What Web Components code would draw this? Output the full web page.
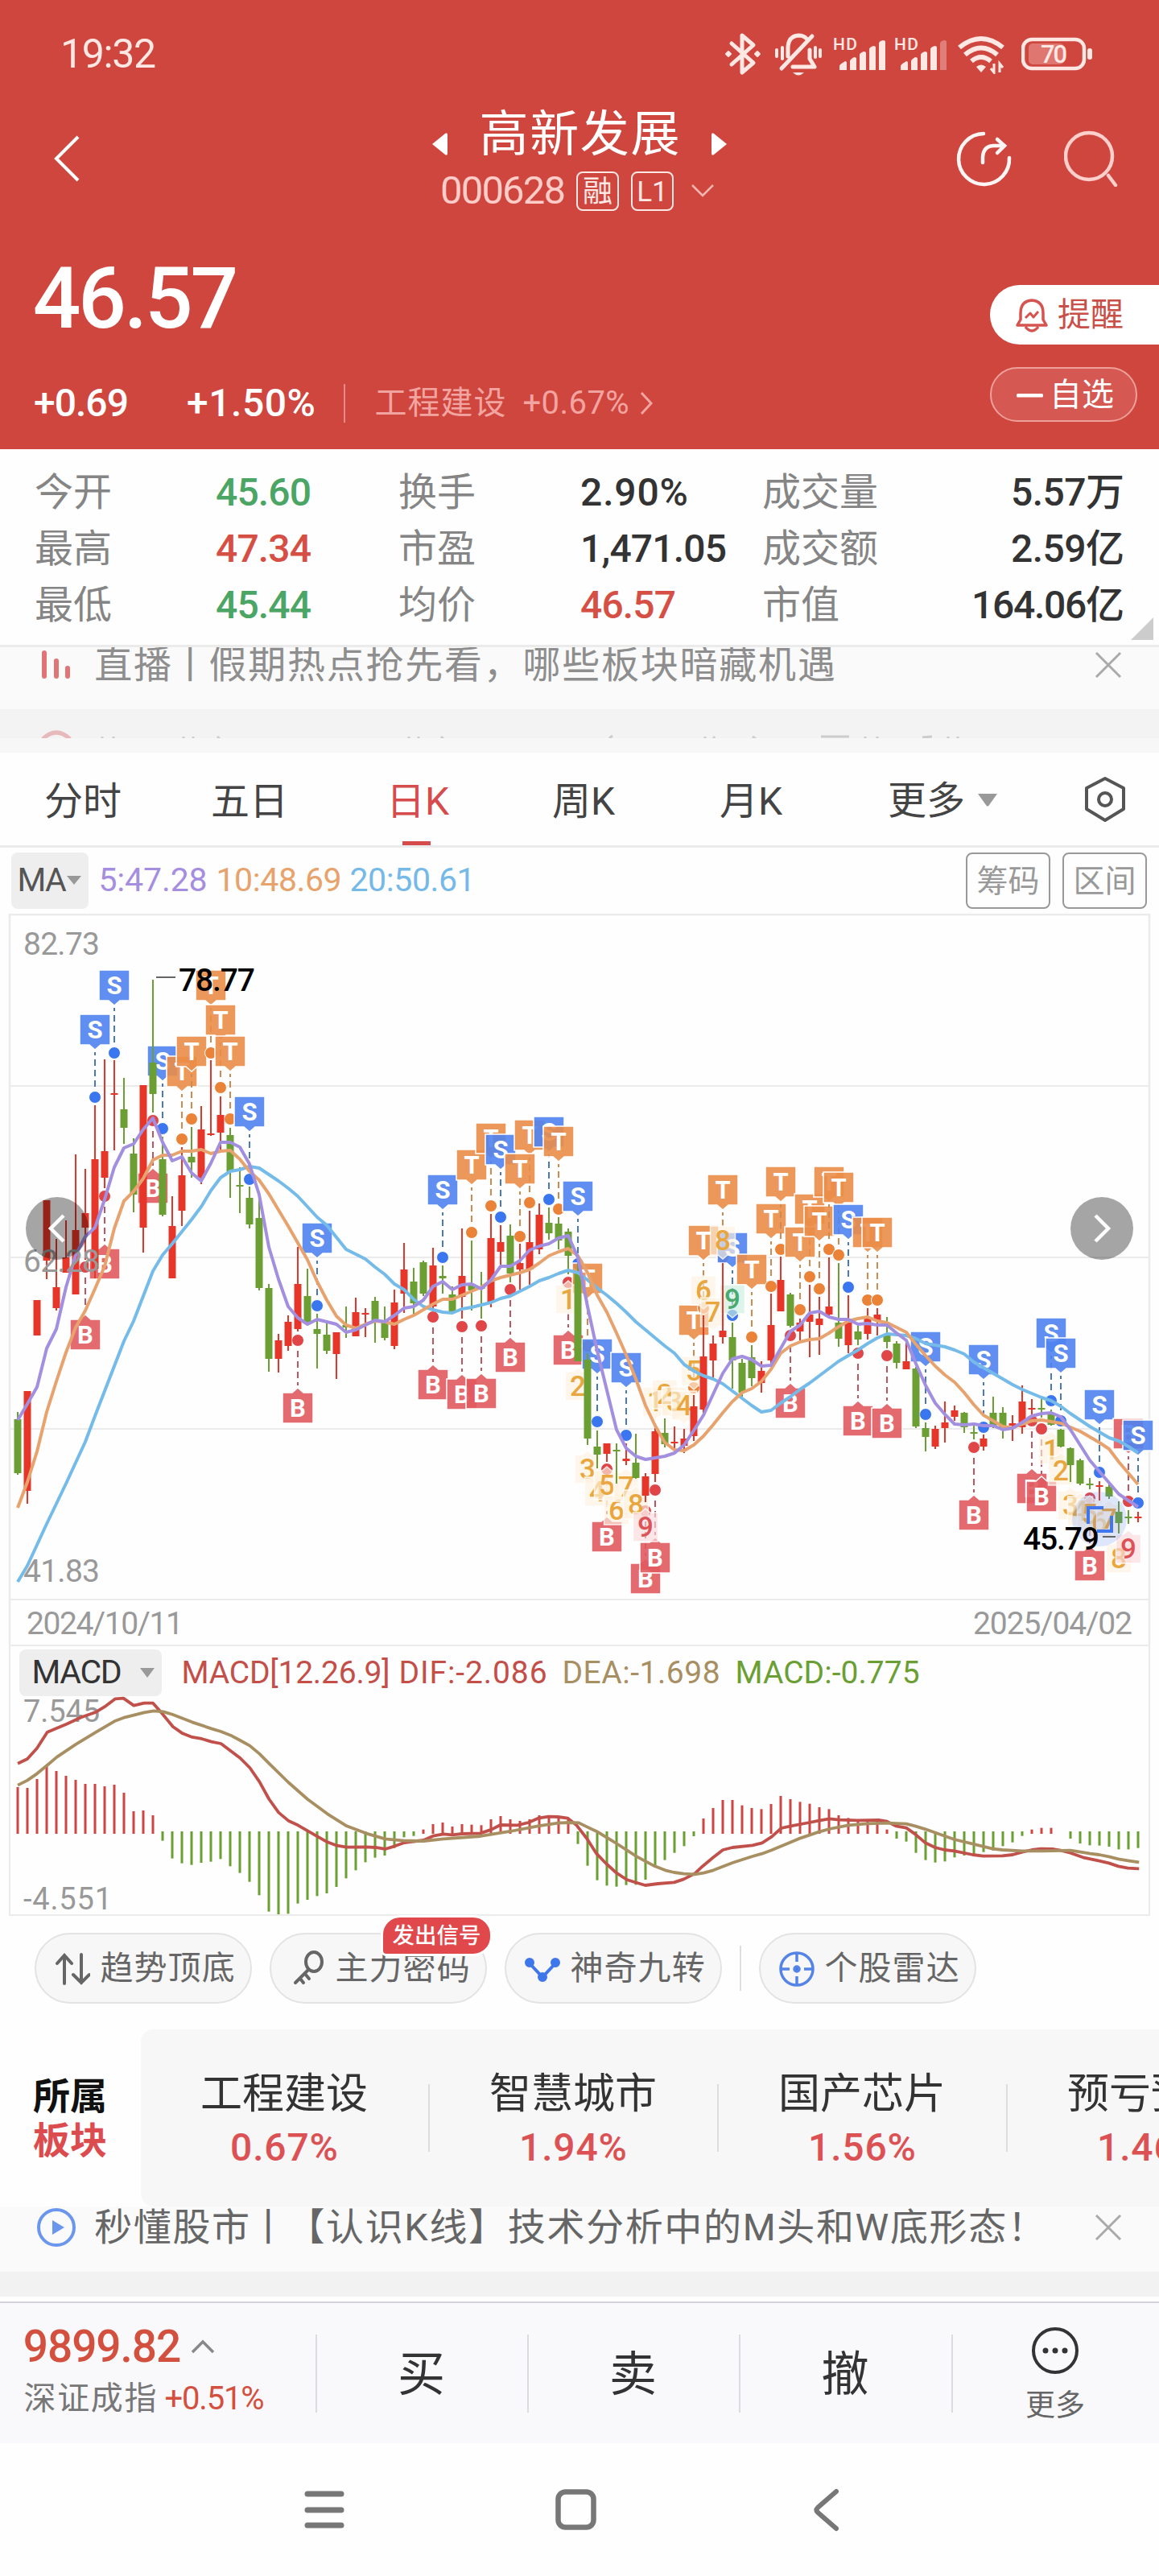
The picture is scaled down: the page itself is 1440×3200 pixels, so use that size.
<!DOCTYPE html>
<html lang="zh-CN">
<head>
<meta charset="utf-8">
<title>高新发展 000628</title>
<style>
  body {
    margin: 0;
    width: 1440px;
    height: 3200px;
    overflow: hidden;
    background: #fefefe;
    font-family: Roboto, "Noto Sans CJK SC", sans-serif;
    line-height: 1.2;
    color: #333;
  }
  .bar { margin: 0 -2px; }
</style>
</head>
<body>
<status-bar></status-bar>
<quote-header></quote-header>
<stat-grid></stat-grid>
<ticker-strip kind="live">
  <fit-text w="917">直播<span class="bar">丨</span>假期热点抢先看，哪些板块暗藏机遇</fit-text>
</ticker-strip>
<next-ticker></next-ticker>
<chart-tabs></chart-tabs>
<ma-row></ma-row>
<k-chart></k-chart>
<macd-chart></macd-chart>
<tool-row></tool-row>
<sector-row></sector-row>
<ticker-strip kind="video">
  <fit-text w="1178">秒懂股市<span class="bar">丨</span>【认识K线】技术分析中的M头和W底形态！</fit-text>
</ticker-strip>
<trade-bar></trade-bar>
<nav-bar></nav-bar>

<script>
  // Small base: every component sets its html once in an open shadow root.
  class Base extends HTMLElement {
    constructor() {
      super();
      this.attachShadow({ mode: "open" }).innerHTML = `
        <style>:host { display: block; box-sizing: border-box; } * { box-sizing: border-box; } svg { display: block; flex: none; }</style>
        ${this.render()}`;
    }
    render() { return ""; }
  }

  class StatusBar extends Base {
    render() {
      const bars = last => `
        <svg width="66" height="46" viewBox="0 0 66 46" overflow="visible">
          <text x="0" y="18" font-family="Roboto" font-size="21" font-weight="500" textLength="30" fill="#ffe7e4">HD</text>
          <g fill="#ffe7e4">
            <path d="M8 43v-5q0-2 7-6q2 0 2 2v9zM21 43V32q0-2 5-5q3 0 3 2v14zM33 43V24q0-2 5-4q3 0 3 2v21zM45 43V17q0-2 5-4q3 0 3 2v28z"/>
            <path opacity="${last}" d="M57 43V10q0-3 5-4q3 0 3 2v35z"/>
          </g>
        </svg>`;
      return `
      <style>
        :host { display: flex; align-items: center; height: 134px; padding: 0 81px 0 77px; background: #cf463f; color: #ffe7e4; }
        .time { font-size: 50px; margin-right: auto; }
        .icons { display: flex; align-items: center; gap: 10px; }
      </style>
      <fit-text class="time" w="115">19:32</fit-text>
      <div class="icons">
        <svg width="46" height="54" viewBox="0 0 46 54" fill="none" stroke="#ffe7e4" stroke-width="5" stroke-linejoin="round" stroke-linecap="round">
          <path d="M9 14L36 38L22 50V4L36 16L9 40"/>
          <path d="M5 24l3 3l-3 3l-3-3zM41 24l3 3l-3 3l-3-3z" fill="#ffe7e4" stroke-width="2"/>
        </svg>
        <svg style="margin:0 4px 0 7px" width="58" height="54" viewBox="0 0 58 54" fill="none" stroke="#ffe7e4" stroke-width="5" stroke-linecap="round">
          <path d="M16 30V20q0-15 13-16q7 0 11 5M43 22v11l6 10H22M46 5L8 45" stroke-linejoin="round"/>
          <path d="M22 50h14q-7 7-14 0z" fill="#ffe7e4" stroke="none"/>
          <path d="M2 22v8M9 19v14M50 19v12M56 22v8" stroke-width="4"/>
        </svg>
        <span style="display:flex;gap:10px">${bars(1)}${bars(.35)}</span>
        <svg style="margin-left:2px" width="60" height="50" viewBox="0 0 60 50" fill="none" stroke="#ffe7e4" stroke-width="6">
          <path d="M3 17Q30-5 57 17M10 26Q30 9 50 26M18 34Q30 24 42 34"/>
          <path d="M24 41q6-5 12 0l-6 7z" fill="#ffe7e4" stroke="none"/>
          <path d="M46 37v11l-4-5M53 48V37l4 5" stroke-width="3"/>
        </svg>
        <svg style="margin-left:10px" width="90" height="44" viewBox="0 0 90 44">
          <rect x="2" y="4" width="76" height="36" rx="11" fill="none" stroke="#ffe7e4" stroke-width="4.5"/>
          <rect x="9" y="9" width="44" height="26" rx="5" fill="#e07670"/>
          <rect x="82" y="15" width="6" height="14" rx="3" fill="#ffe7e4"/>
          <text x="24" y="33" font-family="Roboto" font-size="31" font-weight="500" textLength="33" fill="#ffe7e4">70</text>
        </svg>
      </div>`;
    }
  }

  class QuoteHeader extends Base {
    render() {
      return `
      <style>
        :host { height: 424px; background: #cf463f; color: #fff; }
        .title { display: grid; grid-template: 125px / 1fr 400px 1fr; align-items: center; height: 128px; padding: 0 50px 0 66px; }
        .mid { display: flex; flex-direction: column; align-items: center; align-self: start; margin: 1px 0 0 -16px; }
        .name { display: flex; align-items: center; gap: 40px; height: 66px; font-size: 61px; }
        .name svg { margin-top: 21px; }
        .code { display: flex; align-items: center; gap: 15px; height: 52px; margin: 10px 3px 0 0; font-size: 49px; color: #ffccc8; }
        .tag { width: 53px; height: 49px; border: 2px solid #ffe7e4; border-radius: 8px; font-size: 37px; line-height: 47px; text-align: center; color: #ffe7e4; }
        .acts { display: flex; justify-content: flex-end; gap: 64px; }
        .body { display: grid; grid-template-columns: 1fr 210px; margin-top: 92px; }
        .price { display: block; font-size: 105px; font-weight: 500; line-height: 70px; height: 70px; margin: -17px 0 0 45px; }
        .chg { display: flex; align-items: center; height: 50px; margin: 69px 0 0 44px; font-size: 48px; font-weight: 500; }
        .chg i { width: 2px; height: 48px; background: #e38c87; margin: 0 38px 0 37px; }
        .sec { display: flex; align-items: center; font-size: 40px; font-weight: 400; color: #f2a5a0; }
        .remind { display: flex; align-items: center; gap: 12px; height: 74px; padding: 2px 0 0 32px; background: #fff; border-radius: 37px 0 0 37px; color: #c94f49; font-size: 41px; }
        .opt { display: flex; align-items: center; gap: 8px; width: 183px; height: 68px; margin-top: 28px; padding: 2px 0 0 31px; border: 2px solid #eea09b; border-radius: 34px; background: #d55852; font-size: 40px; }
      </style>
      <div class="title">
        <svg width="34" height="58" viewBox="0 0 34 58" fill="none" stroke="#fff" stroke-width="4"><path d="M31 2L4 29L31 56"/></svg>
        <div class="mid">
          <div class="name">
            <svg width="22" height="30" viewBox="0 0 22 30"><path d="M1 15L17 2Q20 0 20 4V26Q20 30 17 28z" fill="#fff"/></svg>
            <fit-text w="244">高新发展</fit-text>
            <svg width="22" height="30" viewBox="0 0 22 30"><path d="M21 15L5 2Q2 0 2 4V26Q2 30 5 28z" fill="#fff"/></svg>
          </div>
          <div class="code">
            <fit-text w="152">000628</fit-text><span class="tag">融</span><span class="tag" style="font-size:35px">L1</span>
            <svg style="margin-left:6px" width="30" height="18" viewBox="0 0 30 18" fill="none" stroke="#f6b6b2" stroke-width="2.5"><path d="M2 2l13 13L28 2"/></svg>
          </div>
        </div>
        <div class="acts">
          <svg width="70" height="70" viewBox="0 0 70 70" fill="none" stroke="#fff5f4" stroke-width="4.5" stroke-linecap="round">
            <path d="M34 4A31.5 31.5 0 1 0 66 34M33 40V33Q34 19 47 19H60M51 11l9 8l-9 9"/>
          </svg>
          <svg width="68" height="70" viewBox="0 0 68 70" fill="none" stroke="#ffcfcc" stroke-width="4.5" stroke-linecap="round">
            <circle cx="31" cy="32" r="29"/><path d="M55 56l9 12"/>
          </svg>
        </div>
      </div>
      <div class="body">
        <div>
          <fit-text class="price" w="247">46.57</fit-text>
          <div class="chg">
            <fit-text w="114">+0.69</fit-text>
            <fit-text w="156" style="margin-left:76px">+1.50%</fit-text><i></i>
            <span class="sec"><fit-text w="160">工程建设</fit-text>
              <fit-text w="129" style="margin-left:24px">+0.67%</fit-text>
              <svg style="margin-left:15px" width="18" height="30" viewBox="0 0 18 30" fill="none" stroke="#f2a5a0" stroke-width="3"><path d="M2 2l12 13L2 28"/></svg>
            </span>
          </div>
        </div>
        <div>
          <div class="remind">
            <svg width="40" height="42" viewBox="0 0 40 42" fill="none" stroke="#d65450" stroke-width="3.5" stroke-linejoin="round">
              <path d="M6 26V18Q6 3 20 2Q34 3 34 18V26L38 33H2zM12 35Q20 45 28 35"/><path d="M12 24l6-6l4 5l6-7" stroke-width="3"/>
            </svg>提醒
          </div>
          <div class="opt"><svg width="33" height="5"><rect width="33" height="4.5" rx="1.5" fill="#fff"/></svg>自选</div>
        </div>
      </div>`;
    }
  }

  class StatGrid extends Base {
    render() {
      const rows = [
        ["今开", "45.60", "g", 115, "换手", "2.90%", "", 130, "成交量", "5.57万", 137],
        ["最高", "47.34", "r", 115, "市盈", "1,471.05", "", 178, "成交额", "2.59亿", 137],
        ["最低", "45.44", "g", 115, "均价", "46.57", "r", 115, "市值", "164.06亿", 186]
      ];
      return `
      <style>
        :host { position: relative; height: 246px; padding-top: 19px; border-bottom: 3px solid #ebebeb; background: #fefefe; }
        .grid { display: grid; grid-template: repeat(3, 70px) / 227px 225px 228px 224px 1fr auto; align-items: center; margin: 0 45px 0 43px; font-size: 48px; color: #858585; }
        .v { font-weight: 500; font-size: 48px; color: #333; }
        .g { color: #4ba564; } .r { color: #d64f45; }
        .fold { position: absolute; right: 7px; bottom: 6px; }
      </style>
      <div class="grid">${rows.map(r => `
        <span>${r[0]}</span><fit-text class="v ${r[2]}" w="${r[3]}">${r[1]}</fit-text>
        <span>${r[4]}</span><fit-text class="v ${r[6]}" w="${r[7]}">${r[5]}</fit-text>
        <span>${r[8]}</span><fit-text class="v" w="${r[10]}" style="justify-self:end">${r[9]}</fit-text>`).join("")}
      </div>
      <svg class="fold" width="28" height="28"><path d="M28 0V28H0z" fill="#ccc"/></svg>`;
    }
  }

  class TickerStrip extends Base {
    render() {
      const live = this.getAttribute("kind") === "live";
      const icon = live
        ? `<svg width="50" height="50" viewBox="0 0 50 50" stroke="#e07578" stroke-width="6" stroke-linecap="round"><path d="M10 10V39M25 20V39M39 29V39"/></svg>`
        : `<svg width="50" height="50" viewBox="0 0 50 50"><circle cx="25" cy="25" r="22" fill="none" stroke="#6b96ee" stroke-width="4"/><path d="M20 16v18l15-9z" fill="#6b96ee"/></svg>`;
      return `
      <style>
        :host { height: ${live ? 77 : 81}px; overflow: hidden; background: #fafafa; font-size: 47px; color: ${live ? "#8e8e8e" : "#666"}; }
        .row { display: flex; align-items: center; height: 50px; margin: ${live ? -3 : 1}px 45px 0 45px; }
        .x { margin-left: auto; }
        ::slotted(*) { margin-left: 24px; }
      </style>
      <div class="row">${icon}<slot></slot>
        <svg class="x" width="36" height="36" viewBox="0 0 36 36" stroke="#aaa" stroke-width="3"><path d="M3 3L33 33M33 3L3 33"/></svg>
      </div>`;
    }
  }

  // Top edge of the ticker line that is scrolling in.
  class NextTicker extends Base {
    render() {
      return `
      <style>:host { height: 54px; background: linear-gradient(#f3f3f3 0 36px, #f7f7f7 36px); }</style>
      <svg width="1440" height="36" fill="none" stroke="#ccc" stroke-width="3">
        <path d="M53 37Q70 21 87 37" stroke="#e8b9ba" stroke-width="5"/>
        <path d="M127 34v3M141 34v3M228 34v3M240 34v3M270 34l3 3M508 34v3M520 34v3M548 34l3 3M757 36l4-3M876 34v3M888 34l-2 3M935 34l4 3M1020 34h35M1075 34v3M1090 34v3M1146 35l12-1M1178 34v3M1190 34v3"/>
      </svg>`;
    }
  }

  class ChartTabs extends Base {
    render() {
      return `
      <style>
        :host { height: 118px; border-bottom: 3px solid #ebebeb; background: #fefefe; }
        .tabs { display: flex; height: 115px; padding: 3px 39px 0 55px; font-size: 48px; color: #444; line-height: 115px; }
        span { flex: none; width: 208px; white-space: nowrap; }
        .on { color: #d64b4b; background: linear-gradient(#d64b4b, #d64b4b) 20px 107px / 35px 7px no-repeat; }
        .more { display: flex; align-items: center; gap: 15px; width: 241px; }
      </style>
      <div class="tabs">
        <span style="width:207px">分时</span><span style="width:218px">五日</span><span class="on" style="width:206px">日K</span>
        <span>周K</span><span style="width:209px">月K</span>
        <span class="more">更多<svg width="26" height="18"><path d="M1 1H25L15 15Q13 18 11 15z" fill="#999"/></svg></span>
        <svg width="54" height="60" viewBox="0 0 54 60" style="margin:25px 0 0 2px" fill="none" stroke="#555" stroke-width="4" stroke-linejoin="round">
          <path d="M27 4L50 16V42L27 56L4 42V16z"/><circle cx="27" cy="30" r="8"/>
        </svg>
      </div>`;
    }
  }

  class MaRow extends Base {
    render() {
      return `
      <style>
        :host { display: flex; align-items: center; height: 82px; padding: 0 15px 0 14px; background: #fefefe; font-size: 41px; }
        .chip { display: flex; align-items: center; gap: 2px; width: 96px; height: 70px; padding-left: 9px; background: #eee; border-radius: 8px; color: #555; }
        .box { width: 105px; height: 70px; border: 2px solid #999; border-radius: 8px; line-height: 68px; font-size: 39px; text-align: center; color: #999; }
      </style>
      <div class="chip"><fit-text w="58">MA</fit-text><svg width="18" height="12"><path d="M0 0H18L9 11z" fill="#999"/></svg></div>
      <fit-text w="132" style="margin-left:14px;color:#a58ee0">5:47.28</fit-text>
      <fit-text w="153" style="margin-left:14px;color:#e7a36b">10:48.69</fit-text>
      <fit-text w="153" style="margin-left:13px;color:#74b9e8">20:50.61</fit-text>
      <span class="box" style="margin:0 15px 0 auto">筹码</span><span class="box">区间</span>`;
    }
  }

  const RED = "#e63529", GREEN = "#6b9f33";
  const X0 = 22, STEP = 12;
  const cx = i => X0 + STEP * i;

  // colour, high, body top, body bottom, low
  const CANDLES = `g614,623,690,692 r588,588,712,728 r475,475,519,519 r351,351,426,449 r399,459,485,488 r376,422,441,441
    r294,388,468,468 r312,367,385,425 r233,300,436,448 r176,290,323,336 r177,218,220,289 g199,238,261,281 g274,293,344,366
    r208,208,385,416 g77,180,219,242 g272,300,369,371 r346,383,448,448 r285,320,364,383 g260,297,304,323 r234,263,323,331
    r177,268,270,271 r222,245,267,289 g261,270,316,348 g310,332,334,367 g334,348,381,386 g343,373,460,463 g455,460,548,564
    r517,525,548,565 r494,502,532,538 r409,455,511,514 g436,470,502,504 g492,511,517,560 g503,518,538,542 r515,515,542,573
    g483,506,509,522 r472,490,520,520 r485,491,493,521 g471,476,502,528 g483,500,522,525 r462,478,532,536 r404,437,467,491
    g435,452,479,493 g426,428,467,470 r410,432,483,486 g432,445,448,467 g458,468,489,491 r386,445,471,498 g401,455,463,488
    g440,459,461,498 r368,398,478,484 r382,403,415,431 g381,395,442,453 r405,429,437,462 r364,403,437,456 r355,369,412,418
    g360,379,392,400 g372,380,401,412 g386,390,420,443 g424,442,551,551 g541,549,647,655 g637,657,667,684 r653,653,666,676
    g653,661,663,703 r653,672,675,680 g641,677,696,697 r690,694,718,726 r634,638,691,701 g622,640,654,658 r632,651,653,666
    r635,647,656,665 r593,607,644,650 r494,545,611,616 r519,529,550,572 r429,513,521,529 g503,521,550,585 g548,553,590,595
    g531,546,572,582 r551,563,578,590 r467,506,550,556 r421,450,489,489 g466,468,507,509 r498,503,514,525 r456,493,502,546
    r471,498,506,543 r422,483,493,498 g429,503,523,533 r469,503,531,541 g503,514,524,531 r485,497,517,524 r485,493,501,519
    g496,518,527,535 g526,529,553,560 r526,551,561,561 g558,560,632,634 g627,634,645,663 r631,635,657,660 r601,627,634,652
    r606,612,620,625 g614,615,633,640 g631,639,641,648 r642,647,657,662 g595,615,631,634 g608,615,634,647 r618,628,631,650
    r581,601,633,641 r598,609,611,619 g598,609,611,621 g611,616,630,631 g635,636,657,658 g658,659,680,701 g672,674,703,705
    g696,703,705,710 r700,705,707,724 g704,707,719,722 g725,738,752,765 g736,744,746,753 r738,744,746,751`.split(/\s+/);

  const MA5 = [624,604,583,535,511,459,419,396,385,350,310,286,281,263,249,279,302,297,317,327,305,279,279,285,306,344,409,449,
    483,497,505,499,502,505,515,512,506,500,502,494,485,483,475,458,452,462,456,455,461,450,433,433,426,413,408,405,398,395,422,
    483,538,587,636,659,669,673,671,669,665,655,637,618,592,566,548,545,549,557,556,535,514,506,491,489,496,499,499,505,504,506,
    506,516,525,554,581,603,617,629,630,629,631,631,636,634,627,619,616,615,620,636,655,674,688,702,716,724,732];
  const MA10 = [733,701,663,614,576,540,509,488,461,433,386,352,340,324,301,295,295,290,290,288,293,290,289,300,315,326,343,363,
    383,404,425,452,475,495,506,510,505,501,502,505,499,494,487,480,474,474,469,464,459,451,447,444,441,437,429,420,415,411,420,
    441,469,490,516,543,573,606,631,652,661,662,655,644,630,615,601,590,585,576,561,541,532,527,524,523,516,508,501,498,496,501,
    503,509,515,530,544,557,568,577,590,605,618,625,632,634,629,625,624,626,628,633,638,645,652,660,676,690,704];
  const MA20 = [825,805,779,753,728,703,677,651,619,588,557,526,501,470,439,419,405,390,375,359,339,323,315,313,309,311,319,327,
    336,346,359,372,382,397,412,418,424,434,443,455,462,474,483,487,490,491,486,484,481,478,473,470,464,458,451,447,442,438,441,
    450,460,469,479,490,502,512,522,532,541,555,563,569,573,579,588,597,606,614,612,603,595,586,578,569,560,551,544,537,529,522,
    517,518,519,523,529,531,533,537,542,552,559,566,573,580,586,591,596,600,607,616,624,632,639,646,650,657,665];

  // letter, candle index, y of the dot. "b" is a buy pin standing above its dot.
  const PINS = `S8,223 S10,168 B7,434 B9,346 B14,252 S15,262 T17,275 T18,250 T20,168 T21,211 T22,250 S24,325 B29,525 S31,482
    B43,496 S44,422 B46,508 T47,391 B48,507 T49,358 S50,372 B51,462 T53,354 T52,396 S55,350 T56,362 B57,453 S58,430 T59,532
    S60,626 B61,685 S63,643 B65,737 B66,711 T70,584 T71,485 T73,422 S74,494 T76,521 T78,458 T79,412 B80,519 T82,446 T81,487
    T83,461 T84,412 T85,419 S86,459 B87,541 T88,475 T89,475 B90,544 S94,617 B99,658 S100,633 B105,625 B106,635 S107,600
    S108,625 B111,721 S112,689 b115,725 S116,727`.split(/\s+/);

  // digit, candle index, y of the middle, tip direction
  const COUNTS = `1,57,474,u 2,58,582,u 3,59,685,u 4,60,713,u 5,61,705,u 6,62,736,u 7,63,707,u 8,64,729,u 9,65,757,u
    1,66,601,d 2,67,592,d 3,68,601,d 4,69,606,d 5,70,563,d 6,71,463,d 7,72,490,d 8,73,401,d 9,74,474,d
    1,107,661,u 2,108,687,u 3,109,730,u 4,110,737,u 5,111,741,u 6,112,751,u 7,113,747,u 8,114,796,u 9,115,784,u`.split(/\s+/);

  const PIN_COLORS = {
    S: ["#4f83f0", "#3a76f0", "#4a78bf"],
    T: ["#ea8d48", "#ea8238", "#cf8a50"],
    B: ["#e05a5f", "#e04548", "#bf5560"]
  };

  class KChart extends Base {
    pin(p) {
      const kind = p[0].toUpperCase();
      const [i, y] = p.slice(1).split(",").map(Number);
      const [box, dot, dash] = PIN_COLORS[kind];
      const x = cx(i);
      const down = p[0] === "B";
      const s = down ? 1 : -1;
      const mid = y + s * 84;
      return `
        <path d="M${x} ${y + s * 13}V${y + s * 56}" stroke="${dash}" stroke-width="2" stroke-dasharray="8 5"/>
        <circle cx="${x}" cy="${y}" r="7.5" fill="${dot}" stroke="#fff" stroke-width="1"/>
        <path d="M${x - 19} ${mid - 19}${down ? `H${x - 7}L${x} ${mid - 25}L${x + 7} ${mid - 19}` : ""}H${x + 19}V${mid + 19}${down ? "" : `H${x + 7}L${x} ${mid + 25}L${x - 7} ${mid + 19}`}H${x - 19}z"
          fill="${box}" fill-opacity=".9" stroke="#fff" stroke-width="1.5"/>
        <text x="${x}" y="${mid + 11}" class="pin">${kind}</text>`;
    }
    count(c) {
      const [n, i, ys, dir] = c.split(",");
      const x = cx(+i), y = +ys, s = dir === "u" ? -1 : 1;
      const fill = n !== "9" ? "#fdf1de" : dir === "u" ? "#fad9dc" : "#cdeede";
      const color = n !== "9" ? "#e9a63e" : dir === "u" ? "#dc5256" : "#4aa96d";
      return `
        <path d="M${x - 15.5} ${y - 18 * s}H${x + 15.5}V${y + 18 * s}H${x + 6}L${x} ${y + 23 * s}L${x - 6} ${y + 18 * s}H${x - 15.5}z" fill="${fill}" fill-opacity=".65" stroke="#fff" stroke-opacity=".8" stroke-width="1.5"/>
        <text x="${x}" y="${y + 12}" class="cnt" fill="${color}">${n}</text>`;
    }
    candle(c, i) {
      const [h, t, b, l] = c.slice(1).split(",").map(Number);
      const col = c[0] === "r" ? RED : GREEN;
      return `<path d="M${cx(i)} ${h}V${l}" stroke="${col}" stroke-width="2"/><rect x="${cx(i) - 4.5}" y="${t}" width="9" height="${Math.max(b - t, 2)}" fill="${col}"/>`;
    }
    line(data, col) {
      return `<polyline points="${data.map((y, i) => `${cx(i)},${y}`).join(" ")}" fill="none" stroke="${col}" stroke-width="4" stroke-linejoin="round"/>`;
    }
    render() {
      return `
      <style>
        :host { height: 908px; background: #fefefe; }
        text { font-family: Roboto, sans-serif; font-size: 39px; }
        .pin { font-size: 31px; font-weight: 700; fill: #fff; text-anchor: middle; }
        .cnt { font-size: 35px; font-weight: 500; text-anchor: middle; }
        .axis { fill: #999; }
        .mark { font-weight: 500; fill: #000; }
      </style>
      <svg width="1440" height="908" viewBox="0 -5 1440 908">
        <path d="M12 209H1428M12 422H1428M12 635H1428M12 847H1428" stroke="#ebebeb" stroke-width="2"/>
        <path d="M12 903V-4H1428V903" fill="none" stroke="#ebebeb" stroke-width="2.5"/>
        ${PINS.map(p => this.pin(p)).join("")}
        ${COUNTS.map(c => this.count(c)).join("")}
        ${CANDLES.map((c, i) => this.candle(c, i)).join("")}
        ${this.line(MA20, "#74bbea")}${this.line(MA10, "#e7a26d")}${this.line(MA5, "#a38fe0")}
        <circle cx="1366" cy="747" r="34" fill="#5a86f0" fill-opacity=".2"/>
        <path d="M1352 753V733H1371M1363 762H1381V743" fill="none" stroke="#3f78ee" stroke-width="4"/>
        <g class="axis">
          <text x="29" y="46" textLength="95">82.73</text>
          <text x="29" y="440" textLength="95">62.28</text>
          <text x="29" y="825" textLength="95">41.83</text>
          <text x="33" y="890" textLength="195">2024/10/11</text>
          <text x="1209" y="890" textLength="198">2025/04/02</text>
        </g>
        <path d="M194 74H218M1370 769H1386" stroke="#666" stroke-width="2"/>
        <text class="mark" x="222" y="91" textLength="95">78.77</text>
        <text class="mark" x="1271" y="785" textLength="95">45.79</text>
        <circle cx="71" cy="386" r="39" fill-opacity=".35"/>
        <circle cx="1369" cy="386" r="39" fill-opacity=".35"/>
        <path d="M79 370L63 386L79 402M1361 370L1377 386L1361 402" fill="none" stroke="#fff" stroke-width="4.5"/>
      </svg>`;
    }
  }

  // Bar ends per candle, in the same units as the two curves (zero line at 740).
  const HIST = [570,573,540,490,510,528,543,558,558,567,561,591,660,657,675,770,836,854,860,852,848,838,865,890,923,973,1034,1044,
    1042,1004,990,976,966,942,910,880,850,833,825,797,757,752,728,708,702,717,708,710,712,690,678,690,696,690,675,678,686,683,782,
    863,917,937,941,935,934,915,868,842,815,790,753,687,648,618,618,638,648,652,633,603,615,625,632,645,652,675,685,690,692,694,728,
    762,773,815,842,851,847,832,825,828,812,806,790,776,752,728,722,722,740,762,780,787,788,792,802,802,797];
  const DIF = `24,482 37,465 50,425 64,365 90,335 110,310 130,290 143,268 156,241 167,239 181,266 195,257 207,257 220,298 234,345
    247,370 260,384 273,390 286,401 299,408 325,462 338,498 351,550 364,615 377,665 390,695 403,712 430,755 443,775 456,788 469,794
    495,793 508,795 521,801 534,790 547,777 573,768 586,752 600,745 612,748 625,744 650,742 665,728 677,711 700,712 715,702 728,686
    742,680 755,681 768,686 780,712 794,762 807,818 820,855 834,890 848,915 862,927 873,936 890,930 912,925 925,913 940,892 950,866
    965,832 978,804 991,795 1018,787 1031,778 1044,755 1057,723 1070,715 1095,702 1108,695 1122,688 1135,692 1160,694 1190,693
    1200,698 1212,715 1226,722 1238,745 1252,778 1265,795 1278,804 1291,808 1316,822 1330,827 1356,826 1370,822 1383,812 1396,804
    1408,800 1425,801 1435,806 1448,815 1465,832 1487,845 1500,853 1513,865 1526,872 1541,874`;
  const DEA = `24,563 37,545 50,520 64,488 77,458 103,410 130,365 156,323 169,310 195,292 208,286 221,289 234,300 260,328 286,352
    299,363 312,377 325,396 338,416 351,446 364,482 390,552 416,615 443,670 469,715 495,742 521,763 547,770 573,771 600,763 650,753
    690,735 728,715 755,704 770,702 783,703 794,718 807,735 834,780 862,830 886,865 900,880 912,888 925,893 940,895 952,890 965,880
    991,852 1018,828 1031,818 1044,805 1083,760 1108,737 1122,726 1148,712 1174,706 1200,704 1226,707 1238,715 1252,727 1291,765
    1343,800 1356,804 1383,808 1410,808 1448,806 1462,812 1475,818 1487,822 1500,829 1513,838 1526,844 1541,850`;

  class MacdChart extends Base {
    render() {
      const bar = (v, i) => {
        const up = v < 740;
        return v === 740 ? "" : `<path d="M${cx(i)} ${up ? 169 : 166}V${v / 3 - 79}" stroke="${up ? "#cc4643" : "#6b9f33"}" stroke-width="3"/>`;
      };
      return `
      <style>
        :host { height: 337px; background: #fefefe; }
        .frame { height: 337px; margin: 0 11px; border: 2px solid #ebebeb; }
        .head { display: flex; align-items: center; height: 64px; padding: 2px 0 0 11px; font-size: 39px; }
        .chip { display: flex; align-items: center; gap: 24px; width: 177px; height: 58px; padding-left: 17px; background: #eee; border-radius: 8px; color: #333; font-size: 41px; }
        svg { margin-left: -13px; overflow: visible; }
        .chip svg { margin: 0; }
        text { font-family: Roboto, sans-serif; font-size: 38px; fill: #999; }
      </style>
      <div class="frame">
        <div class="head">
          <div class="chip"><fit-text w="109">MACD</fit-text><svg width="18" height="12"><path d="M0 0H18L9 12z" fill="#999"/></svg></div>
          <fit-text w="256" style="margin-left:26px;color:#c34f48">MACD[12.26.9]</fit-text>
          <fit-text w="181" style="margin-left:14px;color:#c34f48">DIF:-2.086</fit-text>
          <fit-text w="193" style="margin-left:22px;color:#a88f62">DEA:-1.698</fit-text>
          <fit-text w="226" style="margin-left:22px;color:#6b9f33">MACD:-0.775</fit-text>
        </div>
        <svg width="1440" height="270" viewBox="0 0 1440 270">
          <text x="29" y="30" textLength="95">7.545</text>
          <text x="29" y="263" textLength="110">-4.551</text>
          ${HIST.map(bar).join("")}
          <g transform="translate(0 -79) scale(.9184 .33333)" fill="none" stroke-width="3.8" stroke-linejoin="round">
            <polyline vector-effect="non-scaling-stroke" points="${DIF}" stroke="#c2504a"/>
            <polyline vector-effect="non-scaling-stroke" points="${DEA}" stroke="#a88f62"/>
          </g>
        </svg>
      </div>`;
    }
  }

  class ToolPill extends Base {
    render() {
      return `
      <style>
        :host { display: flex; align-items: center; gap: 14px; width: 270px; height: 88px; padding: 2px 0 0 23px; border: 2px solid #e3e3e3; border-radius: 44px; background: #f7f7f7; font-size: 41px; color: #666; white-space: nowrap; }
      </style>
      <slot name="icon"></slot><slot></slot>`;
    }
  }

  class ToolRow extends Base {
    render() {
      return `
      <style>
        :host { display: flex; gap: 22px; height: 141px; padding: 21px 0 0 43px; background: #fefefe; }
        .key { position: relative; }
        .badge { position: absolute; left: 138px; top: -22px; width: 139px; height: 51px; border: 3px solid #fff; border-radius: 24px 24px 24px 7px; background: #e0484b; color: #fff; font-size: 27.5px; font-weight: 500; line-height: 45px; text-align: center; white-space: nowrap; }
        i { width: 2px; height: 56px; margin-top: 16px; background: #ddd; }
      </style>
      <tool-pill><svg slot="icon" width="44" height="40" viewBox="0 0 44 40" fill="none" stroke="#666" stroke-width="4" stroke-linecap="round"><path d="M12 38V3M3 13L12 3L21 13M33 2V37M23 27L33 37L43 27"/></svg><fit-text w="164">趋势顶底</fit-text></tool-pill>
      <div class="key">
        <tool-pill><svg slot="icon" width="44" height="46" viewBox="0 0 44 46" fill="none" stroke="#666" stroke-width="4" stroke-linecap="round"><ellipse cx="30" cy="14" rx="10" ry="12"/><path d="M23 24L7 40M13 35l4 5M19 29l5 6"/></svg><fit-text w="164">主力密码</fit-text></tool-pill>
        <span class="badge">发出信号</span>
      </div>
      <tool-pill><svg slot="icon" width="44" height="40" viewBox="0 0 44 40" fill="#3f76ea" stroke="#3f76ea" stroke-width="4"><path d="M6 13L22 30L38 13" fill="none"/><circle cx="6" cy="12" r="4"/><circle cx="38" cy="12" r="4"/><circle cx="22" cy="30" r="4"/></svg><fit-text w="164">神奇九转</fit-text></tool-pill>
      <i></i>
      <tool-pill><svg slot="icon" width="44" height="44" viewBox="0 0 44 44" fill="none" stroke="#5584e8" stroke-width="3.5"><circle cx="22" cy="22" r="20"/><path d="M22 2V13M22 31V42M2 22H13M31 22H42"/><circle cx="22" cy="22" r="3" fill="#3f76ea"/></svg><fit-text w="164">个股雷达</fit-text></tool-pill>`;
    }
  }

  class SectorRow extends Base {
    render() {
      const items = [["工程建设", "0.67%"], ["智慧城市", "1.94%"], ["国产芯片", "1.56%"], ["预亏预减", "1.46%"]];
      return `
      <style>
        :host { display: flex; height: 220px; overflow: hidden; background: #fefefe; }
        .cap { flex: none; width: 175px; padding: 56px 0 0 41px; font-size: 46px; font-weight: 700; line-height: 55px; color: #111; }
        .cap b { display: block; font-weight: 700; color: #dc4c4e; }
        .list { flex: none; display: flex; width: 1500px; background: #f7f7f7; border-radius: 16px; }
        .item { flex: none; width: 359px; padding: 51px 3px 0 0; text-align: center; font-size: 52px; line-height: 60px; background: linear-gradient(#ddd, #ddd) 357px 68px / 2px 84px no-repeat; }
        .item fit-text { display: block; margin: 6px auto 0; font-size: 48px; font-weight: 500; color: #dc5254; }
      </style>
      <div class="cap">所属<b>板块</b></div>
      <div class="list">${items.map(([n, p]) => `<div class="item">${n}<fit-text w="130">${p}</fit-text></div>`).join("")}</div>`;
    }
  }

  class TradeBar extends Base {
    render() {
      return `
      <style>
        :host { height: 213px; background: #fefefe; }
        .gap { height: 31px; background: #f2f2f2; margin-bottom: 6px; }
        .bar { display: grid; grid-template-columns: 392px 263px 263px 264px 1fr; height: 176px; border-top: 2px solid #d3d3da; background: #f9f9fc; }
        .idx { padding: 22px 0 0 31px; }
        .top, .sub { display: flex; align-items: center; height: 64px; font-size: 55px; font-weight: 500; color: #d3503f; }
        .top { gap: 14px; }
        .sub { height: 60px; margin-top: 3px; gap: 13px; font-size: 40px; font-weight: 400; color: #777; }
        .btn { font-size: 59px; text-align: center; line-height: 177px; background: linear-gradient(#dcdce0, #dcdce0) 0 39px / 2px 97px no-repeat; }
        .more { display: flex; flex-direction: column; align-items: center; padding-top: 29px; font-size: 37px; line-height: 46px; color: #666; }
        .more svg { margin-bottom: 16px; }
      </style>
      <div class="gap"></div>
      <div class="bar">
        <div class="idx">
          <div class="top"><fit-text w="192">9899.82</fit-text><svg width="30" height="18" viewBox="0 0 30 18" fill="none" stroke="#888" stroke-width="3.5"><path d="M2 16L15 3L28 16"/></svg></div>
          <div class="sub"><fit-text w="162">深证成指</fit-text><fit-text w="121" style="color:#d3503f">+0.51%</fit-text></div>
        </div>
        <div class="btn">买</div><div class="btn">卖</div><div class="btn">撤</div>
        <div class="btn more">
          <svg width="60" height="60" viewBox="0 0 60 60"><circle cx="30" cy="30" r="27" fill="none" stroke="#333" stroke-width="4"/><g fill="#333"><circle cx="18" cy="30" r="3.5"/><circle cx="30" cy="30" r="3.5"/><circle cx="42" cy="30" r="3.5"/></g></svg>
          更多
        </div>
      </div>`;
    }
  }

  class NavBar extends Base {
    render() {
      return `
      <style>:host { display: flex; align-items: center; gap: 262px; height: 165px; padding-left: 378px; background: #fefefe; }</style>
      <svg width="50" height="54" viewBox="0 0 50 54" stroke="#777" stroke-width="7" stroke-linecap="round"><path d="M4 7H46M4 27H46M4 46H46"/></svg>
      <svg width="52" height="54" viewBox="0 0 52 54"><rect x="3.5" y="4.5" width="44" height="44" rx="9" fill="none" stroke="#777" stroke-width="6.5"/></svg>
      <svg style="margin-left:6px" width="34" height="54" viewBox="0 0 34 54" fill="none" stroke="#777" stroke-width="6" stroke-linecap="round" stroke-linejoin="round"><path d="M29 4L6 24Q3 27 6 30L29 50"/></svg>`;
    }
  }

  // One line of text whose letter spacing is set so that it fills the given width.
  class FitText extends HTMLElement {
    constructor() {
      super();
      this.attachShadow({ mode: "open" }).innerHTML = `
        <style>:host { display: inline-block; flex: none; white-space: nowrap; } span { float: left; margin-left: -0.04em; }</style><span><slot></slot></span>`;
    }
    connectedCallback() {
      const w = Number(this.getAttribute("w"));
      const span = this.shadowRoot.querySelector("span");
      const size = parseFloat(getComputedStyle(this).fontSize);
      const extra = w + size * 0.08 - span.getBoundingClientRect().width;
      this.style.width = `${w}px`;
      span.style.width = "max-content";
      span.style.letterSpacing = `${extra / (this.textContent.length - 1)}px`;
    }
  }

  customElements.define("status-bar", StatusBar);
  customElements.define("quote-header", QuoteHeader);
  customElements.define("stat-grid", StatGrid);
  customElements.define("ticker-strip", TickerStrip);
  customElements.define("next-ticker", NextTicker);
  customElements.define("chart-tabs", ChartTabs);
  customElements.define("ma-row", MaRow);
  customElements.define("k-chart", KChart);
  customElements.define("macd-chart", MacdChart);
  customElements.define("tool-pill", ToolPill);
  customElements.define("tool-row", ToolRow);
  customElements.define("sector-row", SectorRow);
  customElements.define("trade-bar", TradeBar);
  customElements.define("nav-bar", NavBar);
  customElements.define("fit-text", FitText);
</script>
</body>
</html>
